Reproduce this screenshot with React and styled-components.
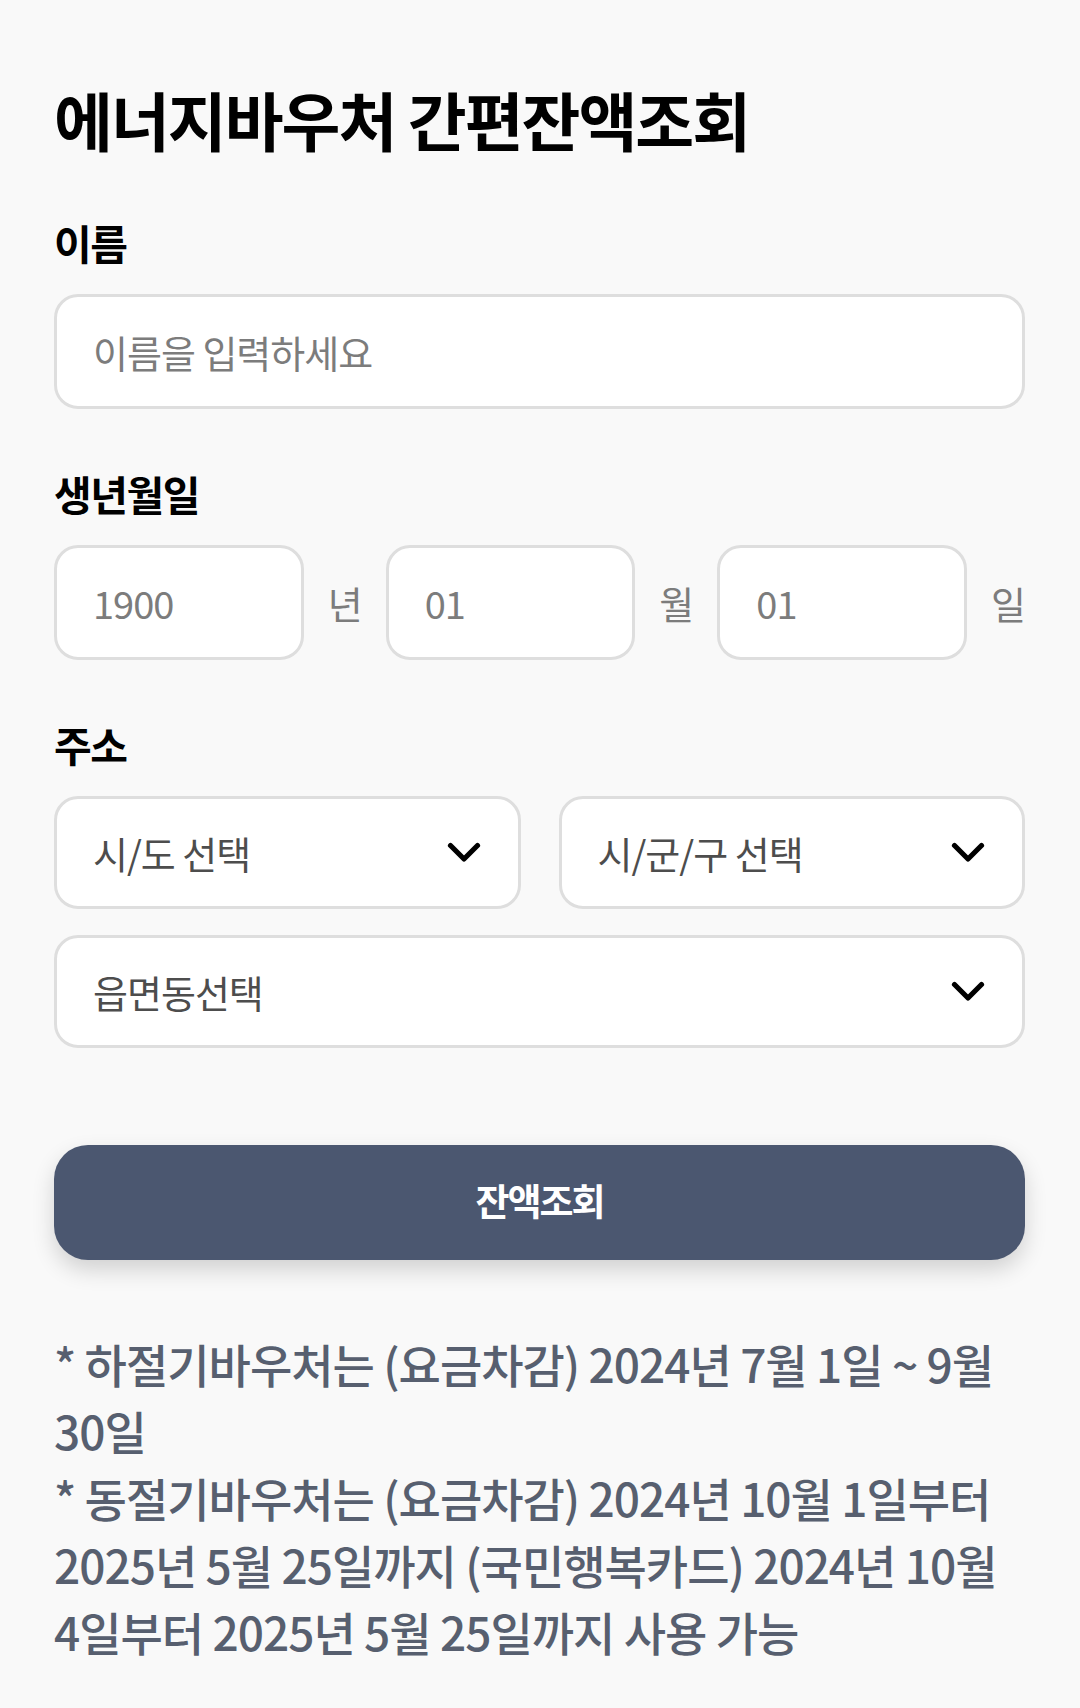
import React from 'react'
import styled, { createGlobalStyle } from 'styled-components'

const GlobalStyle = createGlobalStyle`
  html, body {
    margin: 0;
    padding: 0;
    background: #f9f9f9;
  }
  body {
    font-family: 'Noto Sans CJK KR', 'Noto Sans', sans-serif;
  }
  * {
    box-sizing: border-box;
  }
`

const Chevron = () => (
  <svg width="34" height="22" viewBox="0 0 34 22" fill="none">
    <path d="M3.5 3.5 L17 17 L30.5 3.5" stroke="#000" strokeWidth="5.2" strokeLinecap="round" strokeLinejoin="round" />
  </svg>
)

const App = () => {
  return (
    <Page>
      <GlobalStyle />
      <Title>에너지바우처 간편잔액조회</Title>

      <Field>
        <Label>이름</Label>
        <TextInput placeholder="이름을 입력하세요" />
      </Field>

      <Field>
        <Label>생년월일</Label>
        <DateRow>
          <TextInput placeholder="1900" />
          <Unit>년</Unit>
          <TextInput placeholder="01" />
          <Unit>월</Unit>
          <TextInput placeholder="01" />
          <Unit>일</Unit>
        </DateRow>
      </Field>

      <Field>
        <Label>주소</Label>
        <SelectGrid>
          <SelectBox>
            <span>시/도 선택</span>
            <Chevron />
          </SelectBox>
          <SelectBox>
            <span>시/군/구 선택</span>
            <Chevron />
          </SelectBox>
          <SelectBox wide>
            <span>읍면동선택</span>
            <Chevron />
          </SelectBox>
        </SelectGrid>
      </Field>

      <SubmitButton>잔액조회</SubmitButton>

      <Notes>
        <p>* 하절기바우처는 (요금차감) 2024년 7월 1일 ~ 9월 30일</p>
        <p>* 동절기바우처는 (요금차감) 2024년 10월 1일부터 2025년 5월 25일까지 (국민행복카드) 2024년 10월 4일부터 2025년 5월 25일까지 사용 가능</p>
      </Notes>
    </Page>
  )
}

const Page = styled.div`
  display: flex;
  flex-direction: column;
  padding: 81px 55px 60px 54px;
  min-height: 1708px;
  background: #f9f9f9;
`

const Title = styled.h1`
  margin: 0 0 63px;
  font-size: 64px;
  line-height: 74px;
  font-weight: 700;
  letter-spacing: -2px;
  color: #000;
`

const Field = styled.div`
  display: flex;
  flex-direction: column;
  margin-bottom: 60px;
`

const Label = styled.div`
  margin-bottom: 28px;
  font-size: 41px;
  line-height: 48px;
  font-weight: 700;
  letter-spacing: -1.5px;
  color: #000;
`

const TextInput = styled.input`
  width: 100%;
  min-width: 0;
  height: 115px;
  padding: 0 36px;
  border: 3px solid #dedede;
  border-radius: 24px;
  background: #fff;
  font-family: inherit;
  font-size: 38px;
  letter-spacing: -1px;
  color: #333;
  outline: none;
  &::placeholder {
    color: #7c7c7c;
  }
`

const DateRow = styled.div`
  display: grid;
  grid-template-columns: 1fr auto 1fr auto 1fr auto;
  align-items: center;
  column-gap: 24px;
`

const Unit = styled.span`
  font-size: 38px;
  color: #7c7c7c;
  letter-spacing: -1px;
`

const SelectGrid = styled.div`
  display: grid;
  grid-template-columns: 1fr 1fr;
  column-gap: 38px;
  row-gap: 26px;
  margin-bottom: 37px;
`

const SelectBox = styled.div`
  grid-column: ${(props) => (props.wide ? '1 / span 2' : 'auto')};
  display: flex;
  align-items: center;
  justify-content: space-between;
  height: 113px;
  padding: 0 37px 0 36px;
  border: 3px solid #dedede;
  border-radius: 24px;
  background: #fff;
  font-size: 38px;
  letter-spacing: -1px;
  color: #4d4d4d;
`

const SubmitButton = styled.button`
  height: 115px;
  margin-bottom: 70px;
  padding-bottom: 6px;
  border: none;
  border-radius: 34px;
  background: #4b5770;
  box-shadow: 0 10px 22px rgba(0, 0, 0, 0.16);
  font-family: inherit;
  font-size: 37px;
  font-weight: 700;
  letter-spacing: -2px;
  color: #fff;
`

const Notes = styled.div`
  font-size: 46px;
  line-height: 67px;
  font-weight: 500;
  letter-spacing: -1px;
  color: #575f6f;
  p {
    margin: 0;
  }
`

export default App
